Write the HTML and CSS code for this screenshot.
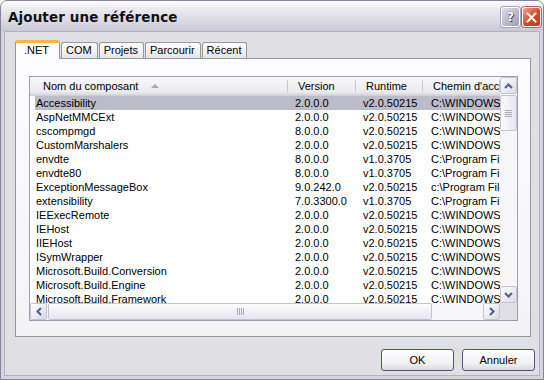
FILE: index.html
```html
<!DOCTYPE html>
<html lang="fr">
  <head>
    <meta charset="UTF-8" />
    <meta name="viewport" content="width=device-width, initial-scale=1.0" />
    <title>Ajouter une référence</title>
    <link rel="stylesheet" href="styles.css">
  </head>
  <body>
    <div class="window">
      <div class="titlebar">
        <span class="title">Ajouter une référence</span>
        <div class="caption-btns">
          <button class="cap-btn help">?</button>
          <button class="cap-btn close">
            <svg width="11" height="11" viewBox="0 0 11 11">
              <path d="M1.5 1.5 L9.5 9.5 M9.5 1.5 L1.5 9.5" stroke="#fff" stroke-width="2" stroke-linecap="square" />
            </svg>
          </button>
        </div>
      </div>

      <div class="client">
        <div class="tabs">
          <div class="tab active">.NET</div>
          <div class="tab">COM</div>
          <div class="tab">Projets</div>
          <div class="tab">Parcourir</div>
          <div class="tab">Récent</div>
        </div>

        <div class="tab-panel">
          <div class="listview">
            <div class="lv-main">
              <div class="lv-body">
                <div class="lv-header">
                  <div class="hcell first">Nom du composant <span class="sort-arrow"></span></div>
                  <div class="hcell">Version</div>
                  <div class="hcell">Runtime</div>
                  <div class="hcell">Chemin d'accès</div>
                </div>
                <div class="lv-rows">
                  <div class="row selected"><span>Accessibility</span><span>2.0.0.0</span><span>v2.0.50215</span><span>C:\WINDOWS\Microsoft.NET\Framework</span></div>
                  <div class="row"><span>AspNetMMCExt</span><span>2.0.0.0</span><span>v2.0.50215</span><span>C:\WINDOWS\Microsoft.NET\Framework</span></div>
                  <div class="row"><span>cscompmgd</span><span>8.0.0.0</span><span>v2.0.50215</span><span>C:\WINDOWS\Microsoft.NET\Framework</span></div>
                  <div class="row"><span>CustomMarshalers</span><span>2.0.0.0</span><span>v2.0.50215</span><span>C:\WINDOWS\Microsoft.NET\Framework</span></div>
                  <div class="row"><span>envdte</span><span>8.0.0.0</span><span>v1.0.3705</span><span>C:\Program Files\Common Files</span></div>
                  <div class="row"><span>envdte80</span><span>8.0.0.0</span><span>v1.0.3705</span><span>C:\Program Files\Common Files</span></div>
                  <div class="row"><span>ExceptionMessageBox</span><span>9.0.242.0</span><span>v2.0.50215</span><span>c:\Program Files\Microsoft SQL Server</span></div>
                  <div class="row"><span>extensibility</span><span>7.0.3300.0</span><span>v1.0.3705</span><span>C:\Program Files\Common Files</span></div>
                  <div class="row"><span>IEExecRemote</span><span>2.0.0.0</span><span>v2.0.50215</span><span>C:\WINDOWS\Microsoft.NET\Framework</span></div>
                  <div class="row"><span>IEHost</span><span>2.0.0.0</span><span>v2.0.50215</span><span>C:\WINDOWS\Microsoft.NET\Framework</span></div>
                  <div class="row"><span>IIEHost</span><span>2.0.0.0</span><span>v2.0.50215</span><span>C:\WINDOWS\Microsoft.NET\Framework</span></div>
                  <div class="row"><span>ISymWrapper</span><span>2.0.0.0</span><span>v2.0.50215</span><span>C:\WINDOWS\Microsoft.NET\Framework</span></div>
                  <div class="row"><span>Microsoft.Build.Conversion</span><span>2.0.0.0</span><span>v2.0.50215</span><span>C:\WINDOWS\Microsoft.NET\Framework</span></div>
                  <div class="row"><span>Microsoft.Build.Engine</span><span>2.0.0.0</span><span>v2.0.50215</span><span>C:\WINDOWS\Microsoft.NET\Framework</span></div>
                  <div class="row"><span>Microsoft.Build.Framework</span><span>2.0.0.0</span><span>v2.0.50215</span><span>C:\WINDOWS\Microsoft.NET\Framework</span></div>
                </div>
              </div>

              <div class="vscroll">
                <div class="sb-btn">
                  <svg width="9" height="6" viewBox="0 0 9 6"><path d="M1 5 L4.5 1.5 L8 5" fill="none" stroke="#4d6185" stroke-width="2" /></svg>
                </div>
                <div class="sb-track">
                  <div class="sb-thumb v-thumb"><span class="grip-v"></span></div>
                </div>
                <div class="sb-btn">
                  <svg width="9" height="6" viewBox="0 0 9 6"><path d="M1 1 L4.5 4.5 L8 1" fill="none" stroke="#4d6185" stroke-width="2" /></svg>
                </div>
              </div>
            </div>

            <div class="hscroll-row">
              <div class="hscroll">
                <div class="sb-btn">
                  <svg width="6" height="9" viewBox="0 0 6 9"><path d="M5 1 L1.5 4.5 L5 8" fill="none" stroke="#4d6185" stroke-width="2" /></svg>
                </div>
                <div class="sb-track h-track">
                  <div class="sb-thumb h-thumb"><span class="grip-h"></span></div>
                </div>
                <div class="sb-btn">
                  <svg width="6" height="9" viewBox="0 0 6 9"><path d="M1 1 L4.5 4.5 L1 8" fill="none" stroke="#4d6185" stroke-width="2" /></svg>
                </div>
              </div>
              <div class="sb-corner"></div>
            </div>
          </div>
        </div>

        <div class="actions">
          <button class="btn">OK</button>
          <button class="btn">Annuler</button>
        </div>
      </div>
    </div>
  </body>
</html>
```

FILE: styles.css
```css
* {
  margin: 0;
  padding: 0;
  box-sizing: border-box;
}
body {
  font-family: "Liberation Sans", Arial, sans-serif;
  font-size: 11px;
  color: #000;
  background: #fff;
  width: 547px;
  height: 380px;
  overflow: hidden;
}
.window {
  width: 544px;
  height: 380px;
  background: #d6d5df;
  border: 1px solid #85849a;
  border-radius: 7px 7px 0 0;
  display: flex;
  flex-direction: column;
}
.titlebar {
  height: 30px;
  flex-shrink: 0;
  border-radius: 6px 6px 0 0;
  background: linear-gradient(#fdfdfe 0%, #ebebf0 25%, #d9d8e2 70%, #c8c7d4 100%);
  display: flex;
  align-items: center;
  justify-content: space-between;
  padding: 0 2px 0 7px;
}
.title {
  font-family: "DejaVu Sans", sans-serif;
  font-weight: bold;
  font-size: 13.5px;
  letter-spacing: 0.1px;
  color: #111;
  padding-top: 1px;
}
.caption-btns {
  display: flex;
  gap: 2px;
  margin-top: 2px;
}
.cap-btn {
  width: 19px;
  height: 20px;
  border-radius: 3px;
  border: 1px solid #fff;
  display: flex;
  align-items: center;
  justify-content: center;
  font-family: "DejaVu Sans", sans-serif;
  font-weight: bold;
  font-size: 12px;
  color: #fff;
}
.help {
  background: linear-gradient(135deg, #dcdbe8, #9e9db6);
  text-shadow: 0 0 1px #444, 1px 1px 0 #555;
  box-shadow: 0 0 0 1px #a4a4b4;
}
.close {
  background: linear-gradient(135deg, #f3a38c, #d4482c 55%, #c13a22);
  box-shadow: 0 0 0 1px #b8625a;
}
.client {
  flex: 1;
  margin: 0 3px 3px;
  background: #e0dfe3;
  border: 1px solid #b3b2c0;
  padding: 7px 4px 0 10px;
}

/* tabs */
.tabs {
  display: flex;
  align-items: flex-end;
  gap: 1px;
  height: 19px;
  position: relative;
  z-index: 1;
}
.tab {
  height: 16px;
  padding: 0 5px 0 4px;
  border: 1px solid #919b9c;
  border-bottom: none;
  border-radius: 3px 3px 0 0;
  background: linear-gradient(#fefefe, #f0f0f4 60%, #e4e4ea);
  line-height: 15px;
}
.tab.active {
  height: 19px;
  padding: 0 10px 0 8px;
  background: #fcfcfe;
  border-top: 3px solid #f8b73b;
  line-height: 14px;
  margin-bottom: -1px;
}
.tab-panel {
  height: 279px;
  margin-right: 4px;
  border: 1px solid #919b9c;
  background: linear-gradient(#fcfcfe, #f4f4f7);
  padding: 17px 12px 0 13px;
}

/* list view */
.listview {
  height: 245px;
  border: 1px solid #9c9fae;
  background: #fff;
  display: flex;
  flex-direction: column;
}
.lv-main {
  flex: 1;
  display: flex;
  min-height: 0;
}
.lv-body {
  flex: 1;
  overflow: hidden;
}
.lv-header {
  height: 19px;
  display: grid;
  grid-template-columns: 258px 68px 67px 1fr;
  background: linear-gradient(#f9f9fa, #ecebef 80%, #d9d8df);
  border-bottom: 1px solid #cfcdd6;
}
.hcell {
  position: relative;
  line-height: 18px;
  padding-left: 10px;
  white-space: nowrap;
  overflow: hidden;
}
.hcell.first {
  padding-left: 13px;
}
.hcell::after {
  content: "";
  position: absolute;
  right: 0;
  top: 3px;
  bottom: 3px;
  width: 1px;
  background: #c9c8d2;
  box-shadow: 1px 0 0 #fff;
}
.sort-arrow {
  display: inline-block;
  margin-left: 10px;
  width: 0;
  height: 0;
  border-left: 4px solid transparent;
  border-right: 4px solid transparent;
  border-bottom: 4px solid #aaa9b2;
  vertical-align: 2px;
}
.row {
  display: grid;
  grid-template-columns: 253px 68px 67px 1fr;
  height: 14px;
  line-height: 14px;
  margin-left: 5px;
  white-space: nowrap;
}
.row span {
  overflow: hidden;
  padding-left: 7px;
}
.row span:first-child {
  padding-left: 1px;
}
.row span:last-child {
  padding-left: 8px;
}
.row.selected {
  background: #bcbbc9;
}

/* scrollbars */
.vscroll {
  width: 17px;
  display: flex;
  flex-direction: column;
  background: #f6f6f8;
}
.hscroll-row {
  height: 17px;
  display: flex;
}
.hscroll {
  flex: 1;
  display: flex;
  background: #f6f6f8;
}
.sb-corner {
  width: 17px;
  background: #e0dfe3;
}
.sb-btn {
  width: 17px;
  height: 17px;
  flex-shrink: 0;
  border: 1px solid #c4c3d2;
  border-radius: 2px;
  background: linear-gradient(135deg, #fdfdfe, #dcdbe5);
  display: flex;
  align-items: center;
  justify-content: center;
}
.sb-track {
  flex: 1;
}
.sb-thumb {
  border: 1px solid #c4c3d2;
  border-radius: 2px;
  background: linear-gradient(90deg, #fdfdfe, #e6e5ee);
  display: flex;
  align-items: center;
  justify-content: center;
}
.v-thumb {
  height: 36px;
  margin-top: 1px;
}
.h-track {
  display: flex;
}
.h-thumb {
  width: 384px;
  margin-left: 1px;
  background: linear-gradient(#fdfdfe, #e6e5ee);
}
.grip-v {
  width: 7px;
  height: 7px;
  background: repeating-linear-gradient(#a9a8b8 0 1px, transparent 1px 2px);
}
.grip-h {
  width: 7px;
  height: 7px;
  background: repeating-linear-gradient(90deg, #a9a8b8 0 1px, transparent 1px 2px);
}

/* buttons */
.actions {
  display: flex;
  justify-content: flex-end;
  gap: 8px;
  margin-top: 12px;
}
.btn {
  width: 73px;
  height: 22px;
  font-family: "Liberation Sans", Arial, sans-serif;
  font-size: 11px;
  border: 1px solid #4c5a78;
  border-radius: 3px;
  background: linear-gradient(#ffffff, #f0f0f3 70%, #d8d7e0);
  color: #000;
}
```
